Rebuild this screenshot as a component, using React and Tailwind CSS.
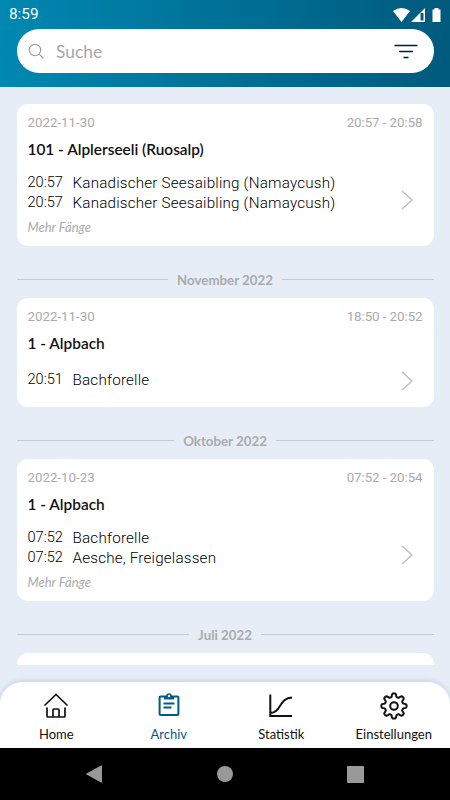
const roboto = "font-['Roboto',sans-serif]";

const cards = [
  {
    date: "2022-11-30",
    range: "20:57 - 20:58",
    title: "101 - Alplerseeli (Ruosalp)",
    rows: [
      ["20:57", "Kanadischer Seesaibling (Namaycush)"],
      ["20:57", "Kanadischer Seesaibling (Namaycush)"],
    ],
    more: true,
  },
  {
    month: "November 2022",
    date: "2022-11-30",
    range: "18:50 - 20:52",
    title: "1 - Alpbach",
    rows: [["20:51", "Bachforelle"]],
  },
  {
    month: "Oktober 2022",
    date: "2022-10-23",
    range: "07:52 - 20:54",
    title: "1 - Alpbach",
    rows: [
      ["07:52", "Bachforelle"],
      ["07:52", "Aesche, Freigelassen"],
    ],
    more: true,
  },
];

function Month({ children }) {
  return (
    <div className="flex h-[52px] items-center gap-[9px] pt-[15px]">
      <div className="h-px flex-1 bg-[#c6cad0]" />
      <span className="pt-[2px] text-[13.3px] leading-[17px] font-bold text-[#ababab]">{children}</span>
      <div className="h-px flex-1 bg-[#c6cad0]" />
    </div>
  );
}

function Card({ entry }) {
  return (
    <div className={`flex flex-col rounded-[11px] bg-white px-[11px] ${entry.more ? "h-[142px]" : "h-[109px]"}`}>
      <div className={`mt-[10px] flex h-[18px] items-center justify-between text-[13.3px] text-[#aaa] ${roboto}`}>
        <span>{entry.date}</span>
        <span className="tracking-[-0.05px]">{entry.range}</span>
      </div>
      <div className="mt-[7px] h-[20px] text-[15.4px] leading-[20px] font-semibold text-[#111]">{entry.title}</div>
      <div className="flex justify-between">
        <div className={entry.more ? "mt-[14px]" : "mt-[17px]"}>
          {entry.rows.map(([time, name], i) => (
            <div key={i} className={`flex h-5 items-center text-black ${roboto}`}>
              <span className="w-[45px] text-[14.6px] font-light">{time}</span>
              <span className="pt-px text-[15.2px] font-light tracking-[0.2px]">{name}</span>
            </div>
          ))}
          {entry.more && <div className="mt-[5px] text-[13px] leading-[18px] text-[#aaa] italic">Mehr Fänge</div>}
        </div>
        <svg
          className={`mr-[10px] h-5 w-3 ${entry.more ? "mt-[31px]" : "mt-[18px]"}`}
          viewBox="0 0 12 20"
          fill="none"
          stroke="#bcbcbc"
          strokeWidth="1.3"
        >
          <path d="M1 1l10 9L1 19" />
        </svg>
      </div>
    </div>
  );
}

function HomeIcon() {
  return (
    <svg className="size-7" viewBox="0 0 28 28" fill="none" stroke="currentColor" strokeWidth="1.7" strokeLinecap="round" strokeLinejoin="round">
      <path d="M3 13L14 2.5 25 13M5 16v8q0 1 1 1h16q1 0 1-1V16M11 25v-7q0-1 1-1h4q1 0 1 1v7" />
    </svg>
  );
}

function ArchiveIcon() {
  return (
    <svg className="size-7" viewBox="0 0 28 28" fill="none" stroke="currentColor" strokeWidth="2" strokeLinejoin="round">
      <rect x="4.6" y="4.5" width="18.8" height="18.5" rx="1" />
      <path d="M9 4h10v3.500H9z" fill="currentColor" stroke="none" />
      <circle cx="14" cy="4" r="2" fill="white" strokeWidth="1.6" />
      <path d="M8.500 11.500h11M8.500 15.500h8" strokeWidth="1.8" />
    </svg>
  );
}

function ChartIcon() {
  return (
    <svg className="size-7" viewBox="0 0 28 28" fill="none" stroke="currentColor" strokeWidth="2">
      <path d="M3.3 2.5V24H25M3.500 21C14 21 12 6 25 5.500" />
    </svg>
  );
}

function gearPath() {
  const points = [];
  for (let i = 0; i <= 160; i++) {
    const a = (i / 160) * Math.PI * 2;
    const wave = Math.tanh(2 * Math.cos(a * 8)) / Math.tanh(2);
    const r = 10.9 + 1.7 * wave;
    points.push(`${(14 + r * Math.sin(a)).toFixed(2)} ${(14 - r * Math.cos(a)).toFixed(2)}`);
  }
  return `M${points.join("L")}Z`;
}

function GearIcon() {
  return (
    <svg className="size-7" viewBox="0 0 28 28" fill="none" stroke="currentColor" strokeWidth="2" strokeLinejoin="round">
      <path d={gearPath()} />
      <circle cx="14" cy="14" r="3.8" />
    </svg>
  );
}

function Tab({ icon, label, active }) {
  return (
    <div className={`flex flex-col items-center pt-[10px] ${active ? "text-[#005b8c]" : "text-[#111]"}`}>
      {icon}
      <span className="mt-[4px] text-[13px] leading-[20px]">{label}</span>
    </div>
  );
}

export default function App() {
  return (
    <div className="flex h-[800px] w-[450px] flex-col overflow-hidden bg-[#e6edf6] font-['Lato',sans-serif]">
      <header className="flex h-[87px] shrink-0 flex-col bg-linear-to-r from-[#0088b2] to-[#005a7d]">
        <div className="flex h-[29px] items-center justify-between pr-[8px] pl-[9px] text-white">
          <span className={`pb-[2px] text-[15.3px] leading-[26px] ${roboto}`}>8:59</span>
          <svg className="h-4 w-[50px]" viewBox="0 0 50 16" fill="white">
            <path d="M1 4Q9.500-2 18 4L9.500 15Z" />
            <path fillRule="evenodd" d="M33 1v14H19zM28.500 6v7.500h3V6z" />
            <path d="M42.500 1h4v1.500h2V15h-8V2.500h2z" />
          </svg>
        </div>
        <div className="mx-[16.5px] flex h-[44px] items-center rounded-full bg-white pr-[16px] pl-[11.5px]">
          <svg className="size-4" viewBox="0 0 16 16" fill="none" stroke="#999" strokeWidth="1.1" strokeLinecap="round">
            <circle cx="7" cy="7" r="5.700" />
            <path d="M11.200 11.200L15 15" />
          </svg>
          <span className="ml-[12px] flex-1 pt-px text-[17.400px] leading-[24px] text-[#a6a6a6]">Suche</span>
          <svg className="h-4 w-6" viewBox="0 0 24 16" fill="none" stroke="#001b4b" strokeWidth="1.4">
            <path d="M.5 2.500h23M5 8.500h14M9.500 14.500h5" />
          </svg>
        </div>
      </header>
      <main className="h-[578px] shrink-0 overflow-hidden px-[16.5px] pt-[17px]">
        {cards.map((entry, i) => (
          <div key={i}>
            {entry.month && <Month>{entry.month}</Month>}
            <Card entry={entry} />
          </div>
        ))}
        <Month>Juli 2022</Month>
        <div className="h-[109px] rounded-[11px] bg-white" />
      </main>
      <nav className="mt-[17px] grid h-[66px] shrink-0 grid-cols-4 rounded-t-[22px] bg-white shadow-[0_-1px_5px_rgba(90,110,150,0.25)]">
        <Tab icon={<HomeIcon />} label="Home" />
        <Tab icon={<ArchiveIcon />} label="Archiv" active />
        <Tab icon={<ChartIcon />} label="Statistik" />
        <Tab icon={<GearIcon />} label="Einstellungen" />
      </nav>
      <footer className="flex h-[52px] shrink-0 items-center justify-between bg-black px-[86px]">
        <svg className="h-[18px] w-4" viewBox="0 0 16 18" fill="#999">
          <path d="M16 1v16q0 1-1 .5L.5 9.500q-.7-.5 0-1L15 .5q1-.5 1 .5z" />
        </svg>
        <div className="size-4 rounded-full bg-[#999]" />
        <div className="size-[17px] rounded-[1px] bg-[#999]" />
      </footer>
    </div>
  );
}
